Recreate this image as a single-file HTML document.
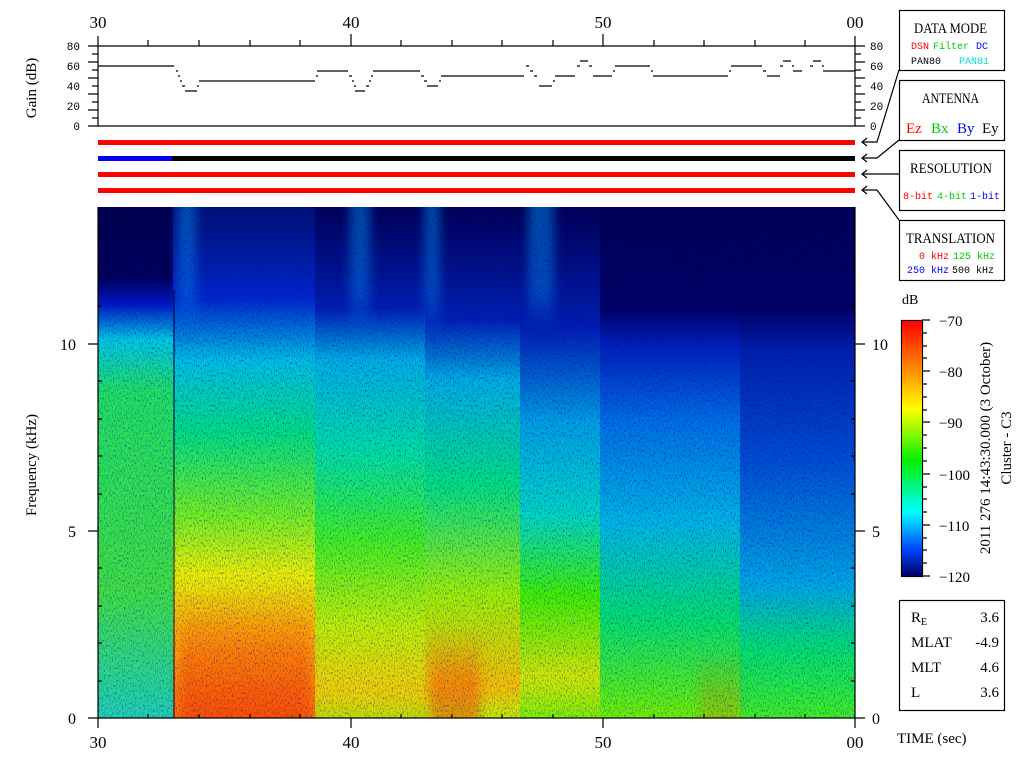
<!DOCTYPE html>
<html><head><meta charset="utf-8"><style>
html,body{margin:0;padding:0;background:#fff;width:1024px;height:768px;overflow:hidden}
svg{display:block}
text{font-family:"Liberation Serif",serif}
.m text,text.m{font-family:"Liberation Mono",monospace}
</style></head><body>
<svg width="1024" height="768" viewBox="0 0 1024 768" xmlns="http://www.w3.org/2000/svg">
<defs>
<clipPath id="sp"><rect x="98" y="207" width="757" height="511"/></clipPath>
<linearGradient id="gA" x1="0" y1="207" x2="0" y2="718" gradientUnits="userSpaceOnUse">
<stop offset="0" stop-color="#000048"/><stop offset="0.14" stop-color="#000058"/><stop offset="0.19" stop-color="#0018c0"/><stop offset="0.26" stop-color="#00c8e0"/><stop offset="0.36" stop-color="#20e060"/><stop offset="0.75" stop-color="#40e040"/><stop offset="1" stop-color="#20d0b0"/></linearGradient>
<linearGradient id="gB" x1="0" y1="207" x2="0" y2="718" gradientUnits="userSpaceOnUse">
<stop offset="0" stop-color="#001070"/><stop offset="0.18" stop-color="#0028c8"/><stop offset="0.3" stop-color="#00c0e0"/><stop offset="0.44" stop-color="#00e080"/><stop offset="0.6" stop-color="#70f020"/><stop offset="0.72" stop-color="#e8f000"/><stop offset="0.84" stop-color="#ffb000"/><stop offset="1" stop-color="#ff7000"/></linearGradient>
<linearGradient id="gC" x1="0" y1="207" x2="0" y2="718" gradientUnits="userSpaceOnUse">
<stop offset="0" stop-color="#000050"/><stop offset="0.2" stop-color="#0020b0"/><stop offset="0.3" stop-color="#00b0e0"/><stop offset="0.48" stop-color="#00e0a0"/><stop offset="0.65" stop-color="#40f020"/><stop offset="0.82" stop-color="#c0f000"/><stop offset="0.95" stop-color="#f0d000"/><stop offset="1" stop-color="#c0e000"/></linearGradient>
<linearGradient id="gD" x1="0" y1="207" x2="0" y2="718" gradientUnits="userSpaceOnUse">
<stop offset="0" stop-color="#000050"/><stop offset="0.22" stop-color="#0020b0"/><stop offset="0.34" stop-color="#00b0e0"/><stop offset="0.54" stop-color="#00e080"/><stop offset="0.76" stop-color="#a0f000"/><stop offset="0.94" stop-color="#f8c000"/><stop offset="1" stop-color="#c0f000"/></linearGradient>
<linearGradient id="gE" x1="0" y1="207" x2="0" y2="718" gradientUnits="userSpaceOnUse">
<stop offset="0" stop-color="#000050"/><stop offset="0.24" stop-color="#0020b0"/><stop offset="0.42" stop-color="#00a0e0"/><stop offset="0.6" stop-color="#00d8c0"/><stop offset="0.76" stop-color="#40f000"/><stop offset="0.92" stop-color="#d0e800"/><stop offset="1" stop-color="#80f000"/></linearGradient>
<linearGradient id="gF" x1="0" y1="207" x2="0" y2="718" gradientUnits="userSpaceOnUse">
<stop offset="0" stop-color="#000050"/><stop offset="0.2" stop-color="#000060"/><stop offset="0.27" stop-color="#0020b8"/><stop offset="0.42" stop-color="#0070e0"/><stop offset="0.62" stop-color="#00b8e0"/><stop offset="0.8" stop-color="#00e070"/><stop offset="1" stop-color="#70f000"/></linearGradient>
<linearGradient id="gG" x1="0" y1="207" x2="0" y2="718" gradientUnits="userSpaceOnUse">
<stop offset="0" stop-color="#000050"/><stop offset="0.2" stop-color="#000060"/><stop offset="0.28" stop-color="#0020a8"/><stop offset="0.5" stop-color="#0050d0"/><stop offset="0.74" stop-color="#00a8e0"/><stop offset="0.86" stop-color="#00e070"/><stop offset="1" stop-color="#40f020"/></linearGradient>
<linearGradient id="red" x1="0" y1="0" x2="0" y2="1"><stop offset="0" stop-color="#ff3000" stop-opacity="0"/><stop offset="0.5" stop-color="#ff3000" stop-opacity="0.35"/><stop offset="1" stop-color="#ff2000" stop-opacity="0.45"/></linearGradient>
<linearGradient id="stripe" x1="0" y1="0" x2="0" y2="1"><stop offset="0" stop-color="#0080e0" stop-opacity="0.6"/><stop offset="0.7" stop-color="#0080e0" stop-opacity="0.5"/><stop offset="1" stop-color="#0080e0" stop-opacity="0"/></linearGradient>
<linearGradient id="cb" x1="0" y1="320" x2="0" y2="576" gradientUnits="userSpaceOnUse">
<stop offset="0" stop-color="#ff0000"/><stop offset="0.2" stop-color="#ff9000"/><stop offset="0.35" stop-color="#ffff00"/><stop offset="0.55" stop-color="#00f000"/><stop offset="0.75" stop-color="#00ffff"/><stop offset="0.9" stop-color="#0040ff"/><stop offset="1" stop-color="#000060"/></linearGradient>
<filter id="nz" x="0" y="0" width="100%" height="100%"><feTurbulence type="fractalNoise" baseFrequency="0.9 0.4" numOctaves="1" seed="3"/><feColorMatrix values="0 0 0 0 0  0 0 0 0 0  0 0 0 0 0.5  0 0 0 -3 1.5"/></filter>
<filter id="bl"><feGaussianBlur stdDeviation="5"/></filter>
</defs>

<g clip-path="url(#sp)">
<rect x="98" y="207" width="76" height="511" fill="url(#gA)"/>
<rect x="173" y="207" width="143" height="511" fill="url(#gB)"/>
<rect x="315" y="207" width="111" height="511" fill="url(#gC)"/>
<rect x="425" y="207" width="96" height="511" fill="url(#gD)"/>
<rect x="520" y="207" width="81" height="511" fill="url(#gE)"/>
<rect x="600" y="207" width="141" height="511" fill="url(#gF)"/>
<rect x="740" y="207" width="115" height="511" fill="url(#gG)"/>
<g filter="url(#bl)">
<rect x="178" y="190" width="18" height="147" fill="url(#stripe)"/><rect x="350" y="190" width="20" height="142" fill="url(#stripe)"/><rect x="424" y="190" width="16" height="147" fill="url(#stripe)"/><rect x="528" y="190" width="26" height="142" fill="url(#stripe)"/>
<rect x="180" y="590" width="130" height="140" fill="url(#red)"/><rect x="430" y="630" width="50" height="100" fill="url(#red)"/><rect x="700" y="650" width="40" height="80" fill="url(#red)" opacity="0.4"/>
</g>
<rect x="98" y="207" width="757" height="511" filter="url(#nz)" opacity="0.55"/>
</g>
<line x1="174" y1="290" x2="174" y2="718" stroke="#003" stroke-width="1"/>

<g stroke="#000" stroke-width="1.2" fill="none">
<path d="M98 46H855M98 126H855M98 36V126M855 36V126"/>
<path d="M148 40V46M199 40V46M250 40V46M300 40V46M351 34V46M401 40V46M452 40V46M502 40V46M553 40V46M603 34V46M654 40V46M704 40V46M755 40V46M805 40V46"/>
<path d="M88 46H98M92 54H98M88 62H98M92 70H98M88 78H98M92 86H98M88 94H98M92 102H98M88 110H98M92 118H98M88 126H98"/>
<path d="M855 46H865M855 54H861M855 62H865M855 70H861M855 78H865M855 86H861M855 94H865M855 102H861M855 110H865M855 118H861M855 126H865"/>
<path d="M98 66H174M176 71h2M178 76h2M180 81h2M182 86h3M185 91h12M197 86h2M199 81H315M316 76h2M317 71H348M349 76h3M352 81h2M354 86h2M355 91h10M366 86h3M369 81h2M371 76h2M373 71H420M421 76h3M424 81h3M427 86h11M439 81h2M441 76H524M526 66h3M530 71h3M534 76h3M539 86h13M553 81h2M555 76H575M577 66h3M580 61h8M589 66h3M593 76H612M613 71h2M615 66H650M651 71h2M653 76H728M729 71h2M731 66H762M763 71h3M767 76H780M780 66h3M783 61H791M792 66h2M793 71H802M810 66h3M813 61H821M822 66h2M823 71H855"/>
<path d="M98 207V718H855V207"/>
<path d="M88 344H98M88 531H98M88 718H98M855 344H865M855 531H865M855 718H865"/>
<path d="M98 269h4M98 306h4M98 381h4M98 419h4M98 456h4M98 494h4M98 568h4M98 606h4M98 643h4M98 681h4M98 232h4"/>
<path d="M851 269h4M851 306h4M851 381h4M851 419h4M851 456h4M851 494h4M851 568h4M851 606h4M851 643h4M851 681h4M851 232h4"/>
<path d="M98 718V728M351 718V728M603 718V728M855 718V728M148 714V718M199 714V718M250 714V718M300 714V718M401 714V718M452 714V718M502 714V718M553 714V718M654 714V718M704 714V718M755 714V718M805 714V718"/>
<rect x="899.5" y="10.5" width="105" height="60"/>
<rect x="899.5" y="80.5" width="105" height="60"/>
<rect x="899.5" y="150.5" width="105" height="60"/>
<rect x="899.5" y="220.5" width="105" height="60"/>
<path d="M899 70L877 142H862M867 138L862 142L867 146"/>
<path d="M899 140L877 158H862M867 154L862 158L867 162"/>
<path d="M899 174H862M867 170L862 174L867 178"/>
<path d="M899 220L877 190H862M867 186L862 190L867 194"/>
<rect x="901.5" y="320.5" width="21" height="256"/>
<path d="M922 320H930M922 371H930M922 422H930M922 474H930M922 525H930M922 576H930M922 333h5M922 346h5M922 358h5M922 384h5M922 397h5M922 410h5M922 435h5M922 448h5M922 461h5M922 487h5M922 499h5M922 512h5M922 538h5M922 550h5M922 563h5"/>
<rect x="899.5" y="600.5" width="105" height="110"/>
</g>
<rect x="902" y="321" width="20" height="255" fill="url(#cb)"/>

<rect x="98" y="140" width="757" height="5" fill="#f00"/>
<rect x="98" y="156" width="757" height="5" fill="#000"/>
<rect x="98" y="156" width="74" height="5" fill="#00f"/>
<rect x="98" y="172" width="757" height="5" fill="#f00"/>
<rect x="98" y="188" width="757" height="5" fill="#f00"/>

<g font-size="17" fill="#000" text-anchor="middle">
<text x="98" y="28">30</text><text x="351" y="28">40</text><text x="603" y="28">50</text><text x="855" y="28">00</text>
<text x="98" y="748">30</text><text x="351" y="748">40</text><text x="603" y="748">50</text><text x="855" y="748">00</text>
</g>
<g font-size="16" fill="#000" text-anchor="end">
<text x="76" y="350">10</text><text x="76" y="537">5</text><text x="76" y="724">0</text>
</g>
<g font-size="16" fill="#000">
<text x="872" y="350">10</text><text x="872" y="537">5</text><text x="872" y="724">0</text>
</g>
<g class="m" font-size="11" fill="#000" text-anchor="end">
<text x="80" y="50">80</text><text x="80" y="70">60</text><text x="80" y="90">40</text><text x="80" y="110">20</text><text x="80" y="130">0</text>
</g>
<g class="m" font-size="11" fill="#000">
<text x="870" y="50">80</text><text x="870" y="70">60</text><text x="870" y="90">40</text><text x="870" y="110">20</text><text x="870" y="130">0</text>
</g>
<text transform="translate(36,88) rotate(-90)" font-size="15" text-anchor="middle">Gain (dB)</text>
<text transform="translate(36,465) rotate(-90)" font-size="15" text-anchor="middle">Frequency (kHz)</text>

<g font-size="15">
<text x="914" y="33" textLength="73" lengthAdjust="spacingAndGlyphs">DATA MODE</text>
<text x="922" y="103" textLength="57" lengthAdjust="spacingAndGlyphs">ANTENNA</text>
<text x="910" y="173" textLength="82" lengthAdjust="spacingAndGlyphs">RESOLUTION</text>
<text x="906" y="243" textLength="89" lengthAdjust="spacingAndGlyphs">TRANSLATION</text>
</g>
<g class="m" font-size="10">
<text x="911" y="49" fill="#f00">DSN</text><text x="933" y="49" fill="#0c0">Filter</text><text x="976" y="49" fill="#00f">DC</text>
<text x="911" y="64" fill="#000">PAN80</text><text x="959" y="64" fill="#0dd">PAN81</text>
<text x="903" y="199" fill="#f00">8-bit</text><text x="937" y="199" fill="#0c0">4-bit</text><text x="970" y="199" fill="#00f">1-bit</text>
<text x="919" y="259" fill="#f00">0 kHz</text><text x="953" y="259" fill="#0c0">125 kHz</text>
<text x="907" y="273" fill="#00f">250 kHz</text><text x="952" y="273" fill="#000">500 kHz</text>
</g>
<g font-size="15">
<text x="906" y="133" fill="#f00">Ez</text><text x="931" y="133" fill="#0c0">Bx</text><text x="957" y="133" fill="#00f">By</text><text x="982" y="133" fill="#000">Ey</text>
</g>
<text x="902" y="304" font-size="14">dB</text>
<g font-size="15">
<text x="939" y="326">−70</text><text x="939" y="377">−80</text><text x="939" y="428">−90</text><text x="939" y="480">−100</text><text x="939" y="531">−110</text><text x="939" y="582">−120</text>
</g>
<text transform="translate(990,448) rotate(-90)" font-size="15" text-anchor="middle">2011 276 14:43:30.000 (3 October)</text>
<text transform="translate(1011,448) rotate(-90)" font-size="15" text-anchor="middle">Cluster - C3</text>
<g font-size="15">
<text x="911" y="622">R<tspan font-size="10" dy="3">E</tspan></text><text x="911" y="647">MLAT</text><text x="911" y="672">MLT</text><text x="911" y="697">L</text>
</g>
<g font-size="15" text-anchor="end">
<text x="999" y="622">3.6</text><text x="999" y="647">-4.9</text><text x="999" y="672">4.6</text><text x="999" y="697">3.6</text>
</g>
<text x="897" y="743" font-size="15">TIME (sec)</text>
</svg>
</body></html>
